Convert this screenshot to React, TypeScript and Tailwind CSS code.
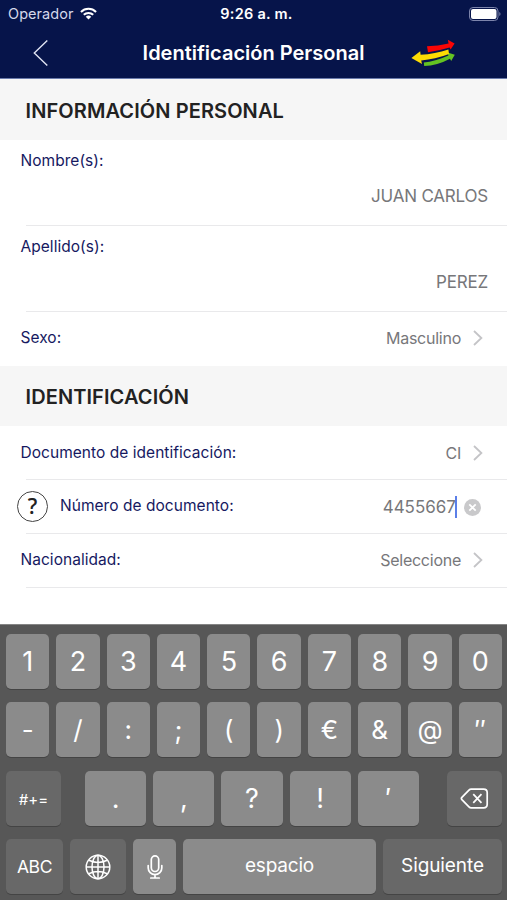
import React from 'react'
import clsx from 'clsx'

const NUMBERS = ['1', '2', '3', '4', '5', '6', '7', '8', '9', '0']
const SYMBOLS = ['-', '/', ':', ';', '(', ')', '€', '&', '@', '″']
const PUNCTUATION = ['.', ',', '?', '!', '′']

const Key = ({ children, className, dark }: { children: React.ReactNode; className?: string; dark?: boolean }) => (
  <button className={clsx('flex h-[55px] items-center justify-center rounded-[5px] leading-none text-white shadow-[0_1px_0_#444]', dark ? 'bg-[#686868]' : 'bg-[#8b8b8b]', className)}>
    {children}
  </button>
)

const Chevron = () => (
  <svg className="h-4 w-[10px] shrink-0" viewBox="0 0 10 16" fill="none" stroke="#c4c4c7" strokeWidth="1.8">
    <path d="M1 1l7.4 7L1 15" />
  </svg>
)

const SectionTitle = ({ children }: { children: React.ReactNode }) => (
  <h2 className="flex h-[60px] items-center bg-[#f6f6f6] pt-[2px] pl-[25.5px] text-[20px] font-semibold tracking-[0.1px] text-[#222]">{children}</h2>
)

const Divider = () => <div className="ml-[26px] h-px shrink-0 bg-[#e9e9eb]" />

const NameRow = ({ label, value }: { label: string; value: string }) => (
  <div className="flex h-[85px] flex-col justify-between pt-[11px] pr-[19px] pb-[19px] pl-[20.5px]">
    <span className="text-[15.5px] leading-5 tracking-[0.04px] text-[#16195f]">{label}</span>
    <span className="text-right text-[17px] leading-5 tracking-[-0.2px] text-[#77777a]">{value}</span>
  </div>
)

const SelectRow = ({ label, value, className }: { label: string; value: string; className?: string }) => (
  <div className={clsx('flex items-center pr-[24.5px] pl-[20.5px]', className)}>
    <span className="flex-1 text-[15.5px] leading-5 tracking-[0.04px] text-[#16195f]">{label}</span>
    <span className="mr-[11.5px] text-[16px] leading-5 tracking-[-0.25px] text-[#77777a]">{value}</span>
    <Chevron />
  </div>
)

const StatusBar = () => (
  <div className="grid h-[27px] grid-cols-3 items-center pr-[6px] pl-[8px] text-white">
    <div className="flex items-center gap-[7px]">
      <span className="text-[14.5px] tracking-[0.05px] text-[#d5d8ea]">Operador</span>
      <svg className="h-[13px] w-[17px]" viewBox="0 0 18 13" fill="none" stroke="#fff" strokeWidth="2.2">
        <path d="M1 4.8a11.4 11.4 0 0 1 16 0" />
        <path d="M4 7.9a7.2 7.2 0 0 1 10 0" />
        <path d="M9 12.8L6.1 9.9a4.2 4.2 0 0 1 5.8 0z" fill="#fff" stroke="none" />
      </svg>
    </div>
    <span className="pl-[4px] text-center text-[14.5px] font-semibold tracking-[0.25px] whitespace-nowrap">9:26 a. m.</span>
    <svg className="h-[14px] w-8 justify-self-end" viewBox="0 0 32 14">
      <rect x="0.5" y="0.5" width="28.5" height="13" rx="3.5" fill="none" stroke="#7c84ab" />
      <rect x="2" y="2" width="25.5" height="10" rx="2" fill="#fff" />
      <path d="M30.3 5v4c1.6-.6 1.6-3.4 0-4z" fill="#7c84ab" />
    </svg>
  </div>
)

const NavBar = () => (
  <div className="flex h-[52px] items-center border-b border-[#6a7bab] pr-[52px] pl-[33px]">
    <svg className="h-[26px] w-[15px]" viewBox="0 0 15 26" fill="none" stroke="#dfe3f2" strokeWidth="1.4">
      <path d="M14.3 0.5L1.3 13l13 12.5" />
    </svg>
    <h1 className="flex-1 pl-[52px] text-center text-[20px] font-semibold whitespace-nowrap text-white">Identificación Personal</h1>
    <svg className="ml-[4px] h-7 w-[44px]" viewBox="0 0 44 28">
      <path d="M16 7.2Q27 6.8 37.6 4.4L36.8 0.8L43.6 4.6L39.6 10.6L38.6 8.4Q28 11.6 17 13.2z" fill="#fb0505" />
      <path d="M12.8 23.4Q24 22.4 37.4 16.4L36.6 13.4L43.8 15.8L40.2 22L39 19.8Q26 26.8 13.2 27z" fill="#64c322" />
      <path d="M0.4 19L9.2 12.2L9.6 15.8Q24 14.8 37.4 10.4L38 15Q24 20.4 10.2 21.4L11 25z" fill="#fddc04" />
    </svg>
  </div>
)

const GlobeIcon = () => (
  <svg className="h-[26px] w-[26px]" viewBox="0 0 26 26" fill="none" stroke="#fff" strokeWidth="1.5">
    <circle cx="13" cy="13" r="11.8" />
    <ellipse cx="13" cy="13" rx="6" ry="11.8" />
    <path d="M13 1v24M1 13h24M3.8 6.2q9.2 4.4 18.4 0M3.8 19.8q9.2-4.4 18.4 0" />
  </svg>
)

const MicIcon = () => (
  <svg className="h-[24px] w-[16px]" viewBox="0 0 16 24" fill="none" stroke="#fff" strokeWidth="1.7" strokeLinecap="round">
    <rect x="4.3" y="0.9" width="7.4" height="15.6" rx="3.7" />
    <path d="M1.2 10.5v2.5a6.8 6.6 0 0 0 13.6 0v-2.5M8 19.8v3M3.8 23h8.4" />
  </svg>
)

const BackspaceIcon = () => (
  <svg className="h-[21px] w-[29px]" viewBox="0 0 30 22" fill="none" stroke="#fff" strokeWidth="1.8" strokeLinejoin="round">
    <path d="M11.5 1.2H24.5Q28.3 1.2 28.3 5V17Q28.3 20.8 24.5 20.8H11.5Q10.2 20.8 9.2 19.8L1.8 12.2Q0.7 11 1.8 9.8L9.2 2.2Q10.2 1.2 11.5 1.2z" />
    <path d="M13.7 6.4l8.6 9.2M22.3 6.4l-8.6 9.2" />
  </svg>
)

const Keyboard = () => (
  <div className="flex flex-1 flex-col gap-[13.5px] border-t border-[#858585] bg-[#575757] pt-[8.5px] pr-[5px] pl-[6px]">
    <div className="grid grid-cols-10 gap-[7px]">
      {NUMBERS.map((n) => <Key key={n} className="pt-[1px] text-[27px]">{n}</Key>)}
    </div>
    <div className="grid grid-cols-10 gap-[7px]">
      {SYMBOLS.map((s) => <Key key={s} className="text-[26px]">{s}</Key>)}
    </div>
    <div className="flex justify-between">
      <Key dark className="w-[55px] pt-[3px] text-[15px]">#+=</Key>
      <div className="flex gap-[7px] pr-[4px]">
        {PUNCTUATION.map((p) => <Key key={p} className="w-[61.2px] text-[27px]">{p}</Key>)}
      </div>
      <Key dark className="w-[55px]"><BackspaceIcon /></Key>
    </div>
    <div className="flex gap-[7px]">
      <Key dark className="w-[57px] text-[17.5px] tracking-[-0.4px]">ABC</Key>
      <Key dark className="w-[56px]"><GlobeIcon /></Key>
      <Key className="w-[43px]"><MicIcon /></Key>
      <Key className="w-[193px] pb-[3px] text-[19px] tracking-[-0.2px]">espacio</Key>
      <Key dark className="flex-1 pb-[3px] text-[19px] tracking-[-0.1px]">Siguiente</Key>
    </div>
  </div>
)

const App = () => (
  <div className="flex h-[900px] w-[507px] flex-col overflow-hidden bg-white font-['Inter','Liberation_Sans',sans-serif]">
    <header className="bg-[#06144a]">
      <StatusBar />
      <NavBar />
    </header>

    <main className="h-[545px]">
      <div className="h-px bg-[#f6f6f6]" />
      <SectionTitle>INFORMACIÓN PERSONAL</SectionTitle>
      <NameRow label="Nombre(s):" value="JUAN CARLOS" />
      <Divider />
      <NameRow label="Apellido(s):" value="PEREZ" />
      <Divider />
      <SelectRow label="Sexo:" value="Masculino" className="h-[54px] pb-[3px]" />
      <SectionTitle>IDENTIFICACIÓN</SectionTitle>
      <SelectRow label="Documento de identificación:" value="CI" className="h-[53px]" />
      <Divider />
      <div className="flex h-[53px] items-center pr-[26px] pl-[17px]">
        <span className="flex h-[31px] w-[31px] items-center justify-center rounded-full border-[1.5px] border-[#444] font-['Open_Sans',sans-serif] text-[21px] font-semibold leading-none text-[#222]">?</span>
        <span className="flex-1 pb-px pl-[12px] text-[15.5px] leading-5 tracking-[0.04px] text-[#16195f]">Número de documento:</span>
        <span className="text-[17px] leading-5 text-[#77777a]">4455667</span>
        <span className="-ml-px h-[22px] w-[2px] bg-[#5b7fe8]" />
        <svg className="mt-[2px] ml-[7px] h-[17px] w-[17px]" viewBox="0 0 17 17">
          <circle cx="8.5" cy="8.5" r="8.5" fill="#c9c9cb" />
          <path d="M5.3 5.3l6.4 6.4M11.7 5.3l-6.4 6.4" stroke="#fff" strokeWidth="1.8" />
        </svg>
      </div>
      <Divider />
      <SelectRow label="Nacionalidad:" value="Seleccione" className="h-[53px] pb-[2px]" />
      <Divider />
    </main>

    <Keyboard />
  </div>
)

export default App
